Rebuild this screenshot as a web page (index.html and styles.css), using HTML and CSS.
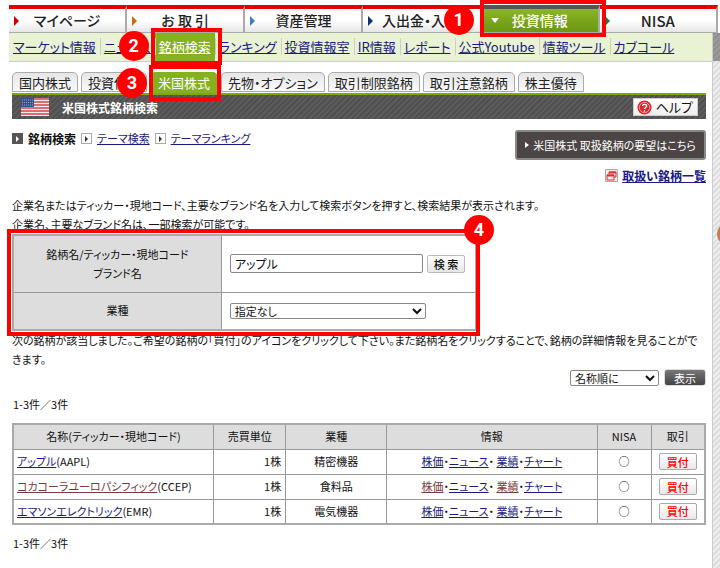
FILE: index.html
```html
<!DOCTYPE html>
<html lang="ja">
<head>
    <meta charset="UTF-8">
    <meta name="viewport" content="width=device-width, initial-scale=1.0">
    <title>米国株式銘柄検索</title>
    <link rel="stylesheet" href="styles.css">
</head>
<body>
    <nav class="global-nav">
        <a href="#" class="nav-item nav-mypage">マイページ</a>
        <a href="#" class="nav-item nav-order">お 取 引</a>
        <a href="#" class="nav-item nav-asset">資産管理</a>
        <a href="#" class="nav-item nav-cash">入出金・入出庫</a>
        <a href="#" class="nav-item nav-active">投資情報<span class="mark mark-nav"><span class="mark-number">1</span></span></a>
        <a href="#" class="nav-item nav-nisa">NISA</a>
    </nav>

    <div class="page">
        <div class="main">
            <nav class="sub-nav">
                <a href="#">マーケット情報</a>
                <a href="#">ニュース</a>
                <a href="#" class="active">銘柄検索<span class="mark mark-sub"><span class="mark-number">2</span></span></a>
                <a href="#">ランキング</a>
                <a href="#">投資情報室</a>
                <a href="#">IR情報</a>
                <a href="#">レポート</a>
                <a href="#">公式Youtube</a>
                <a href="#">情報ツール</a>
                <a href="#">カブコール</a>
            </nav>

            <div class="content">
                <nav class="tabs">
                    <a href="#">国内株式</a>
                    <a href="#">投資信託</a>
                    <a href="#" class="active">米国株式<span class="mark mark-tab"><span class="mark-number">3</span></span></a>
                    <a href="#">先物・オプション</a>
                    <a href="#">取引制限銘柄</a>
                    <a href="#">取引注意銘柄</a>
                    <a href="#">株主優待</a>
                </nav>

                <header class="title-bar">
                    <svg class="flag" viewBox="0 0 28 18" width="28" height="18" aria-hidden="true">
                        <rect width="28" height="18" fill="#f4ecec"/>
                        <path d="M0 1h28M0 4h28M0 7h28M0 10h28M0 13h28M0 16h28" stroke="#d0424c" stroke-width="1.5"/>
                        <rect width="13" height="9" fill="#35508c"/>
                        <path d="M1 2h11M1 4.500h11M1 7h11" stroke="#8fa3cc" stroke-dasharray="1 1"/>
                    </svg>
                    <h1>米国株式銘柄検索</h1>
                    <button type="button" class="help-btn">
                        <svg viewBox="0 0 16 16" width="15" height="15" aria-hidden="true">
                            <circle cx="8" cy="8" r="7.500" fill="#d8262c"/>
                            <circle cx="8" cy="8" r="5.500" fill="none" stroke="#f5a5a5"/>
                            <path d="M6 6.500C6 4 10.300 4 10.300 6.500C10.300 8 8 8 8 9.600M8 11v1.500" fill="none" stroke="#fff" stroke-width="1.500"/>
                        </svg>
                        ヘルプ
                    </button>
                </header>

                <div class="top-row">
                    <nav class="local-nav">
                        <span class="arrow arrow-current"></span><strong>銘柄検索</strong>
                        <span class="arrow"></span><a href="#">テーマ検索</a>
                        <span class="arrow"></span><a href="#">テーマランキング</a>
                    </nav>
                    <button type="button" class="request-btn"><span class="request-arrow"></span>米国株式 取扱銘柄の要望はこちら</button>
                </div>

                <div class="list-link">
                    <svg viewBox="0 0 13 13" width="13" height="13" aria-hidden="true">
                        <path d="M.5.5h12v12H.500z" fill="#eee" stroke="#aaa"/>
                        <path d="M4 5V3h7v5H9M2 6h7v5H2z" fill="none" stroke="#e03030"/>
                        <path d="M2 6.500h7M4 3.500h7" stroke="#e03030" stroke-width="2"/>
                    </svg>
                    <a href="#">取扱い銘柄一覧</a>
                </div>

                <p class="lead">企業名またはティッカー・現地コード、主要なブランド名を入力して検索ボタンを押すと、検索結果が表示されます。<br>企業名、主要なブランド名は、一部検索が可能です。</p>

                <form class="search-form" action="javascript:void(0)">
                    <table class="search-table">
                        <tr class="row-name">
                            <th><label for="brandName">銘柄名/ティッカー・現地コード<br>ブランド名</label></th>
                            <td>
                                <div class="field">
                                    <input type="text" id="brandName" name="brandName" class="text-input" value="アップル">
                                    <button type="submit" class="search-btn">検 索</button>
                                </div>
                            </td>
                        </tr>
                        <tr class="row-sector">
                            <th><label for="sector">業種</label></th>
                            <td>
                                <div class="field">
                                    <select id="sector" name="sector" class="sector-select">
                                        <option>指定なし</option>
                                    </select>
                                </div>
                            </td>
                        </tr>
                    </table>
                    <span class="mark mark-form"><span class="mark-number">4</span></span>
                </form>

                <p class="result-note">次の銘柄が該当しました。ご希望の銘柄の「買付」のアイコンをクリックして下さい。また銘柄名をクリックすることで、銘柄の詳細情報を見ることができます。</p>

                <form class="sort-form" action="javascript:void(0)">
                    <select name="sort" class="sort-select" aria-label="並び順">
                        <option>名称順に</option>
                    </select>
                    <button type="submit" class="show-btn">表示</button>
                </form>

                <p class="count">1-3件／3件</p>

                <table class="result-table">
                    <colgroup>
                        <col class="col-name">
                        <col class="col-unit">
                        <col class="col-sector">
                        <col class="col-info">
                        <col class="col-nisa">
                        <col class="col-trade">
                    </colgroup>
                    <thead>
                        <tr>
                            <th>名称(ティッカー・現地コード)</th>
                            <th>売買単位</th>
                            <th>業種</th>
                            <th>情報</th>
                            <th>NISA</th>
                            <th>取引</th>
                        </tr>
                    </thead>
                    <tbody>
                        <tr>
                            <td class="name"><a href="#">アップル</a>(AAPL)</td>
                            <td class="unit">1株</td>
                            <td>精密機器</td>
                            <td><a href="#">株価</a>・<a href="#">ニュース</a>・ <a href="#">業績</a>・<a href="#">チャート</a></td>
                            <td>○</td>
                            <td><button type="button" class="buy-btn">買付</button></td>
                        </tr>
                        <tr>
                            <td class="name"><a href="#" class="visited">コカコーラユーロパシフィック</a>(CCEP)</td>
                            <td class="unit">1株</td>
                            <td>食料品</td>
                            <td><a href="#" class="visited">株価</a>・<a href="#">ニュース</a>・ <a href="#" class="visited">業績</a>・<a href="#">チャート</a></td>
                            <td>○</td>
                            <td><button type="button" class="buy-btn">買付</button></td>
                        </tr>
                        <tr>
                            <td class="name"><a href="#">エマソンエレクトリック</a>(EMR)</td>
                            <td class="unit">1株</td>
                            <td>電気機器</td>
                            <td><a href="#">株価</a>・<a href="#">ニュース</a>・ <a href="#">業績</a>・<a href="#">チャート</a></td>
                            <td>○</td>
                            <td><button type="button" class="buy-btn">買付</button></td>
                        </tr>
                    </tbody>
                </table>

                <p class="count">1-3件／3件</p>
            </div>
        </div>
        <div class="gutter"><span class="side-button"></span></div>
    </div>
</body>
</html>
```

FILE: styles.css
```css
* {
    margin: 0;
    padding: 0;
    box-sizing: border-box;
}

body {
    font-family: "Noto Sans CJK JP", sans-serif;
    font-feature-settings: "palt";
    font-size: 11px;
    line-height: 19px;
    color: #111;
    background: #fff;
    min-height: 100vh;
    display: flex;
    flex-direction: column;
    overflow-x: hidden;
}

a {
    color: #1a1a80;
}

button,
input,
select {
    font-family: inherit;
    font-feature-settings: inherit;
    font-size: 11px;
    color: #111;
}

/* global navigation */
.global-nav {
    display: grid;
    grid-template-columns: repeat(6, 1fr);
    margin: 5px 2px 0 9px;
}

.nav-item {
    position: relative;
    height: 28px;
    border-top: 4px solid #e60000;
    border-right: 2px solid #aaa;
    border-bottom: 1px solid #aaa;
    background: linear-gradient(#fff, #fff 50%, #e6e6e6);
    color: #222;
    font-size: 14px;
    font-weight: 500;
    line-height: 23px;
    text-align: center;
    text-decoration: none;
}

.nav-item::before {
    content: '';
    position: absolute;
    left: 5px;
    top: 7px;
    border: 5px solid transparent;
    border-left-color: #c00;
    border-right-width: 0;
}

.nav-order::before {
    border-left-color: #d06a10;
}

.nav-asset::before {
    border-left-color: #3a80c0;
}

.nav-cash::before {
    border-left-color: #10306a;
}

.nav-cash {
    padding-left: 12px;
}

.nav-nisa::before {
    border-left-color: #108030;
}

.nav-nisa {
    font-size: 15px;
}

.nav-active {
    border-top-color: #555;
    background: linear-gradient(#8cb52c, #7aa61c 50%, #6c9812);
    color: #fff;
}

.nav-active::before {
    left: 9px;
    top: 9px;
    border: 4px solid transparent;
    border-top: 5px solid #fff;
    border-bottom-width: 0;
}

/* numbered red frames */
.mark {
    position: absolute;
    z-index: 2;
    border: 4px solid #f00;
    pointer-events: none;
}

.mark-number {
    position: absolute;
    width: 30px;
    height: 30px;
    border-radius: 50%;
    background: #f00;
    color: #fff;
    font-family: Roboto, sans-serif;
    font-size: 18px;
    font-weight: bold;
    line-height: 30px;
    text-align: center;
}

.mark-nav {
    inset: -9px -8px -5px -2px;
}

.mark-nav .mark-number {
    left: -40px;
    top: 1px;
}

.mark-sub {
    inset: -5px -7px -4px -4px;
}

.mark-tab {
    inset: -8px -4px -9px -2px;
}

.mark-sub .mark-number,
.mark-tab .mark-number {
    left: -36px;
    top: -1px;
}

.mark-form {
    inset: -5px -3px -5px -5px;
}

.mark-form .mark-number {
    right: -18px;
    top: -18px;
}

.page {
    display: flex;
    flex: 1;
}

.main {
    flex: 1;
    min-width: 0;
    padding-left: 9px;
}

.gutter {
    position: relative;
    width: 8px;
    border-left: 1px solid #ccc;
    background:
        linear-gradient(rgba(0, 0, 0, 0.35), rgba(0, 0, 0, 0.35)) 0 0 / 100% 28px no-repeat,
        repeating-linear-gradient(135deg, #ddd 0, #ddd 2px, #eee 2px, #eee 4px);
    overflow: hidden;
}

.side-button {
    position: absolute;
    left: 4px;
    top: 189px;
    width: 24px;
    height: 24px;
    border: 1px solid #888;
    border-radius: 50%;
    background: #ee7030;
}

.sub-nav {
    display: flex;
    height: 29px;
    border-bottom: 1px solid #ccc;
    background: #e9f2d3;
    font-size: 13px;
    line-height: 28px;
    white-space: nowrap;
}

.sub-nav a {
    position: relative;
    padding: 0 4px;
}

.sub-nav a + a::before {
    content: '';
    position: absolute;
    left: 0;
    top: 5px;
    height: 17px;
    border-left: 1px solid #ccc;
}

.sub-nav .active {
    height: 28px;
    background: #85b020;
    color: #fff;
}

.content {
    padding: 10px 6px 0 3px;
}

.tabs {
    display: flex;
    gap: 3px;
    font-size: 13px;
    line-height: 19px;
    white-space: nowrap;
}

.tabs a {
    position: relative;
    height: 20px;
    margin-bottom: 1px;
    padding: 0 6px;
    border: 1px solid #aaa;
    border-radius: 5px 5px 0 0;
    background: linear-gradient(#e6e6e6, #fafafa);
    color: #222;
    text-decoration: none;
}

.tabs .active {
    height: 21px;
    margin-bottom: 0;
    padding: 0 7px;
    background: #85b020;
    border-color: #85b020;
    color: #fff;
}

.title-bar {
    display: flex;
    align-items: center;
    height: 26px;
    padding: 0 8px 0 9px;
    border-top: 2px solid #7ca818;
    background: repeating-linear-gradient(135deg, #505050 0, #505050 2px, #5b5b5b 2px, #5b5b5b 4px);
}

.title-bar h1 {
    flex: 1;
    margin-left: 13px;
    color: #fff;
    font-size: 12px;
}

.help-btn {
    display: flex;
    align-items: center;
    gap: 4px;
    height: 18px;
    padding: 0 4px 0 3px;
    border: 1px solid #ccc;
    background: linear-gradient(#fff, #eee);
    font-size: 13px;
    line-height: 16px;
}

.top-row {
    display: flex;
    justify-content: space-between;
    align-items: flex-start;
    padding-top: 11px;
}

.local-nav {
    display: flex;
    align-items: center;
    gap: 5px;
    line-height: 17px;
}

.local-nav strong {
    font-size: 12px;
}

.arrow {
    display: flex;
    align-items: center;
    justify-content: center;
    width: 11px;
    height: 11px;
    border: 1px solid #aaa;
    background: #fff;
}

.arrow::before {
    content: '';
    border: 3px solid transparent;
    border-left-color: #333;
    border-right-width: 0;
}

.arrow-current {
    border-color: #555;
    background: #555;
}

.arrow-current::before {
    border-left-color: #fff;
}

.request-btn {
    display: flex;
    align-items: center;
    gap: 4px;
    height: 30px;
    padding: 0 8px;
    border: 2px solid #888;
    border-radius: 3px;
    background: #4b4545;
    color: #fff;
}

.request-arrow {
    border: 3px solid transparent;
    border-left: 4px solid #fff;
    border-right-width: 0;
}

.list-link {
    display: flex;
    justify-content: flex-end;
    align-items: center;
    gap: 4px;
    padding-top: 6px;
    font-size: 12px;
    font-weight: bold;
}

.lead {
    padding-top: 11px;
}

/* search form */
.search-form {
    position: relative;
    width: 67%;
}

.search-table {
    width: 100%;
    border-collapse: collapse;
    border: 2px solid #aaa;
}

.search-table th,
.search-table td {
    border: 1px solid #999;
}

.search-table th {
    width: 45%;
    background: #ddd;
    font-weight: normal;
}

.search-table td {
    padding-left: 8px;
}

.row-name {
    height: 57px;
}

.row-sector {
    height: 38px;
}

.field {
    display: flex;
    align-items: center;
    gap: 4px;
    padding-right: 10px;
}

.text-input {
    flex: 1;
    min-width: 0;
    height: 19px;
    padding: 0 4px;
    border: 1px solid #888;
    border-radius: 2px;
    font-size: 12px;
}

.search-btn {
    width: 38px;
    height: 18px;
    border: 1px solid #bbb;
    border-radius: 2px;
    background: linear-gradient(#fff, #e6e6e6);
    font-weight: 500;
    line-height: 14px;
}

.sector-select,
.sort-select {
    appearance: none;
    height: 16px;
    padding: 0 18px 0 4px;
    border: 1px solid #888;
    border-radius: 2px;
    background: #fff url("data:image/svg+xml,%3Csvg xmlns='http://www.w3.org/2000/svg' width='10' height='8'%3E%3Cpath d='M1 2l4 4 4-4' fill='none' stroke='%23111' stroke-width='2'/%3E%3C/svg%3E") right 3px center no-repeat;
    line-height: 14px;
}

.sector-select {
    flex: 1;
    margin-right: 39px;
}

/* result list */
.sort-form {
    display: flex;
    justify-content: flex-end;
    align-items: center;
    gap: 5px;
    height: 17px;
}

.sort-select {
    width: 89px;
}

.show-btn {
    width: 42px;
    height: 17px;
    border: 1px solid #ddd;
    border-radius: 3px;
    background: linear-gradient(#777, #444);
    color: #fff;
    line-height: 14px;
}

.count {
    padding: 9px 1px;
}

.result-table {
    width: 100%;
    table-layout: fixed;
    border-collapse: collapse;
    border: 2px solid #aaa;
    text-align: center;
}

.result-table th,
.result-table td {
    height: 25px;
    border: 1px solid #999;
    line-height: 17px;
}

.result-table th {
    background: #ddd;
    font-weight: normal;
}

.col-name {
    width: 29%;
}

.col-unit {
    width: 72px;
}

.col-sector {
    width: 101px;
}

.col-nisa,
.col-trade {
    width: 54px;
}

.result-table .name {
    padding-left: 3px;
    text-align: left;
}

.result-table .unit {
    padding-right: 4px;
    text-align: right;
}

.visited {
    color: #7a3a3a;
}

.buy-btn {
    display: block;
    width: 38px;
    height: 17px;
    margin: 0 auto;
    border: 1px solid #aaa;
    border-radius: 2px;
    background: linear-gradient(#fff, #e8e8e8);
    color: #f00;
    font-weight: 500;
    line-height: 14px;
}
```
